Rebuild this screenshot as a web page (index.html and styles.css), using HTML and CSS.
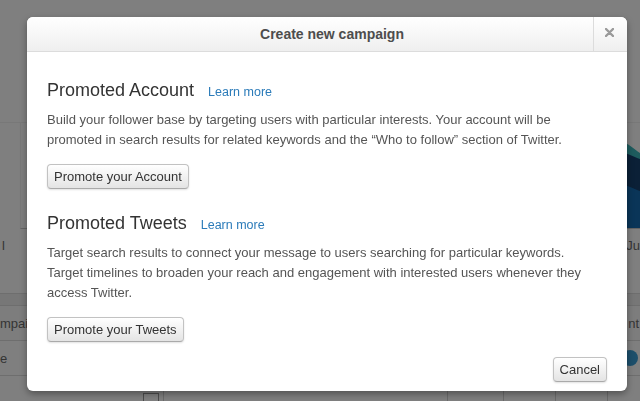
FILE: index.html
```html
<!DOCTYPE html>
<html>
<head>
<meta charset="utf-8">
<link rel="stylesheet" href="styles.css">
</head>
<body>
<div class="page">
  <div class="top-area"></div>
  <div class="chart-row">
    <svg class="chart" width="40" height="105" viewBox="0 0 40 105">
      <path d="M0 30 C8 22 14 16 20 18 C28 20 34 26 40 30 L40 105 L0 105 Z" fill="#3cb8bc"/>
      <path d="M0 38 C8 32 14 28 20 29 C28 30 34 34 40 36 L40 105 L0 105 Z" fill="#16406e"/>
      <path d="M0 72 C8 66 14 60 20 61 C28 62 34 66 40 68 L40 105 L0 105 Z" fill="#146ab0"/>
    </svg>
  </div>
  <div class="axis-row">
    <span class="axis-left">l</span>
    <span class="axis-right">Ju</span>
  </div>
  <div class="band"></div>
  <div class="table-row head">
    <span class="cell-left">mpaig</span>
    <span class="cell-right">nt</span>
  </div>
  <div class="table-row">
    <span class="cell-left">e</span>
    <span class="dot"></span>
  </div>
  <div class="table-row last">
    <span class="col c1"><span class="check"></span></span>
    <span class="col c2"></span>
    <span class="col c3"></span>
    <span class="col c4"></span>
    <span class="col c5"></span>
    <span class="col c6"></span>
  </div>
</div>
<div class="overlay"></div>
<div class="modal">
  <div class="modal-header">
    <h2 class="modal-title">Create new campaign</h2>
    <div class="close">
      <svg width="9" height="9" viewBox="0 0 9 9"><path d="M1 1 L8 8 M8 1 L1 8" stroke="#9a9a9a" stroke-width="2.4" stroke-linecap="round"/></svg>
    </div>
  </div>
  <div class="modal-body">
    <section class="option">
      <h3 class="option-title">Promoted Account <a class="learn" href="#">Learn more</a></h3>
      <p class="option-text">Build your follower base by targeting users with particular interests. Your account will be promoted in search results for related keywords and the “Who to follow” section of Twitter.</p>
      <button class="btn">Promote your Account</button>
    </section>
    <section class="option">
      <h3 class="option-title">Promoted Tweets <a class="learn" href="#">Learn more</a></h3>
      <p class="option-text">Target search results to connect your message to users searching for particular keywords. Target timelines to broaden your reach and engagement with interested users whenever they access Twitter.</p>
      <button class="btn">Promote your Tweets</button>
    </section>
  </div>
  <div class="modal-footer">
    <button class="btn">Cancel</button>
  </div>
</div>
</body>
</html>
```
FILE: styles.css
```css
html, body {
  margin: 0;
  padding: 0;
  width: 640px;
  height: 401px;
  overflow: hidden;
  font-family: "Liberation Sans", Arial, sans-serif;
  background: #fff;
}

.page {
  width: 640px;
  height: 401px;
  display: flex;
  flex-direction: column;
  color: #6a6a6a;
  font-size: 13px;
}

.top-area {
  height: 122px;
  border-bottom: 1px solid #f0f0f0;
  flex: none;
}

.chart-row {
  height: 105px;
  border-bottom: 1px solid #c8c8c8;
  display: flex;
  justify-content: flex-end;
  flex: none;
  border-left: 1px solid #f0f0f0;
  margin-left: 20px;
}

.chart {
  display: block;
}

.axis-row {
  height: 64px;
  display: flex;
  justify-content: space-between;
  align-items: flex-start;
  padding: 9px 0 0 2px;
  box-sizing: border-box;
  flex: none;
}

.band {
  height: 11px;
  background: #efefef;
  border-top: 1px solid #dcdcdc;
  border-bottom: 1px solid #dcdcdc;
  flex: none;
}

.table-row {
  height: 34px;
  border-bottom: 1px solid #dcdcdc;
  display: flex;
  align-items: center;
  justify-content: space-between;
  flex: none;
}

.table-row.head {
  background: #fafafa;
}

.cell-right {
  margin-right: 1px;
}

.dot {
  width: 16px;
  height: 16px;
  border-radius: 50%;
  background: #3a9fd6;
  margin-right: 2px;
}

.table-row.last {
  border-bottom: none;
  align-items: stretch;
  justify-content: flex-start;
  height: 26px;
}

.col {
  border-right: 1px solid #d4d4d4;
  display: flex;
  align-items: flex-end;
  justify-content: flex-end;
  flex: none;
}

.c1 { width: 164px; padding-right: 4px; box-sizing: border-box; }
.c2 { width: 283px; }
.c3 { width: 55px; }
.c4 { width: 51px; }
.c5 { width: 51px; }
.c6 { flex: 1; border-right: none; }

.check {
  width: 14px;
  height: 8px;
  border: 1px solid #999;
  border-bottom: none;
  background: #fff;
}

.overlay {
  position: fixed;
  inset: 0;
  background: rgba(0, 0, 0, 0.5);
}

.modal {
  position: absolute;
  left: 27px;
  top: 17px;
  width: 600px;
  background: #fff;
  border-radius: 6px;
  box-shadow: 0 3px 7px rgba(0, 0, 0, 0.35);
  overflow: hidden;
}

.modal-header {
  display: flex;
  height: 34px;
  border-bottom: 1px solid #dcdcdc;
  background: linear-gradient(#ffffff, #efefef);
}

.modal-title {
  flex: 1;
  margin: 0;
  padding-left: 44px;
  font-size: 14px;
  font-weight: bold;
  color: #4d4d4d;
  text-align: center;
  line-height: 34px;
}

.close {
  width: 34px;
  border-left: 1px solid #dcdcdc;
  display: flex;
  align-items: center;
  justify-content: center;
  padding: 0 3px 3px 0;
  box-sizing: border-box;
}

.close svg {
  display: block;
}

.modal-body {
  padding: 28px 20px 0;
  display: flex;
  flex-direction: column;
  gap: 24px;
}

.option-title {
  margin: 0 0 10px;
  font-size: 18px;
  font-weight: normal;
  line-height: 20px;
  color: #333;
}

.learn {
  margin-left: 9px;
  font-size: 12.5px;
  line-height: 12px;
  color: #2b7bb9;
  text-decoration: none;
}

.option-text {
  margin: 0 0 14px;
  max-width: 540px;
  font-size: 13px;
  line-height: 20px;
  color: #555;
}

.btn {
  display: inline-block;
  font-family: "Liberation Sans", Arial, sans-serif;
  font-size: 13px;
  line-height: 15px;
  color: #333;
  padding: 4px 6px;
  border: 1px solid #c2c2c2;
  border-bottom-color: #aaa;
  border-radius: 4px;
  background: linear-gradient(#ffffff, #e4e4e4);
  box-shadow: 0 1px 2px rgba(0, 0, 0, 0.12);
}

.modal-footer {
  display: flex;
  justify-content: flex-end;
  padding: 15px 20px 9px;
}
```
